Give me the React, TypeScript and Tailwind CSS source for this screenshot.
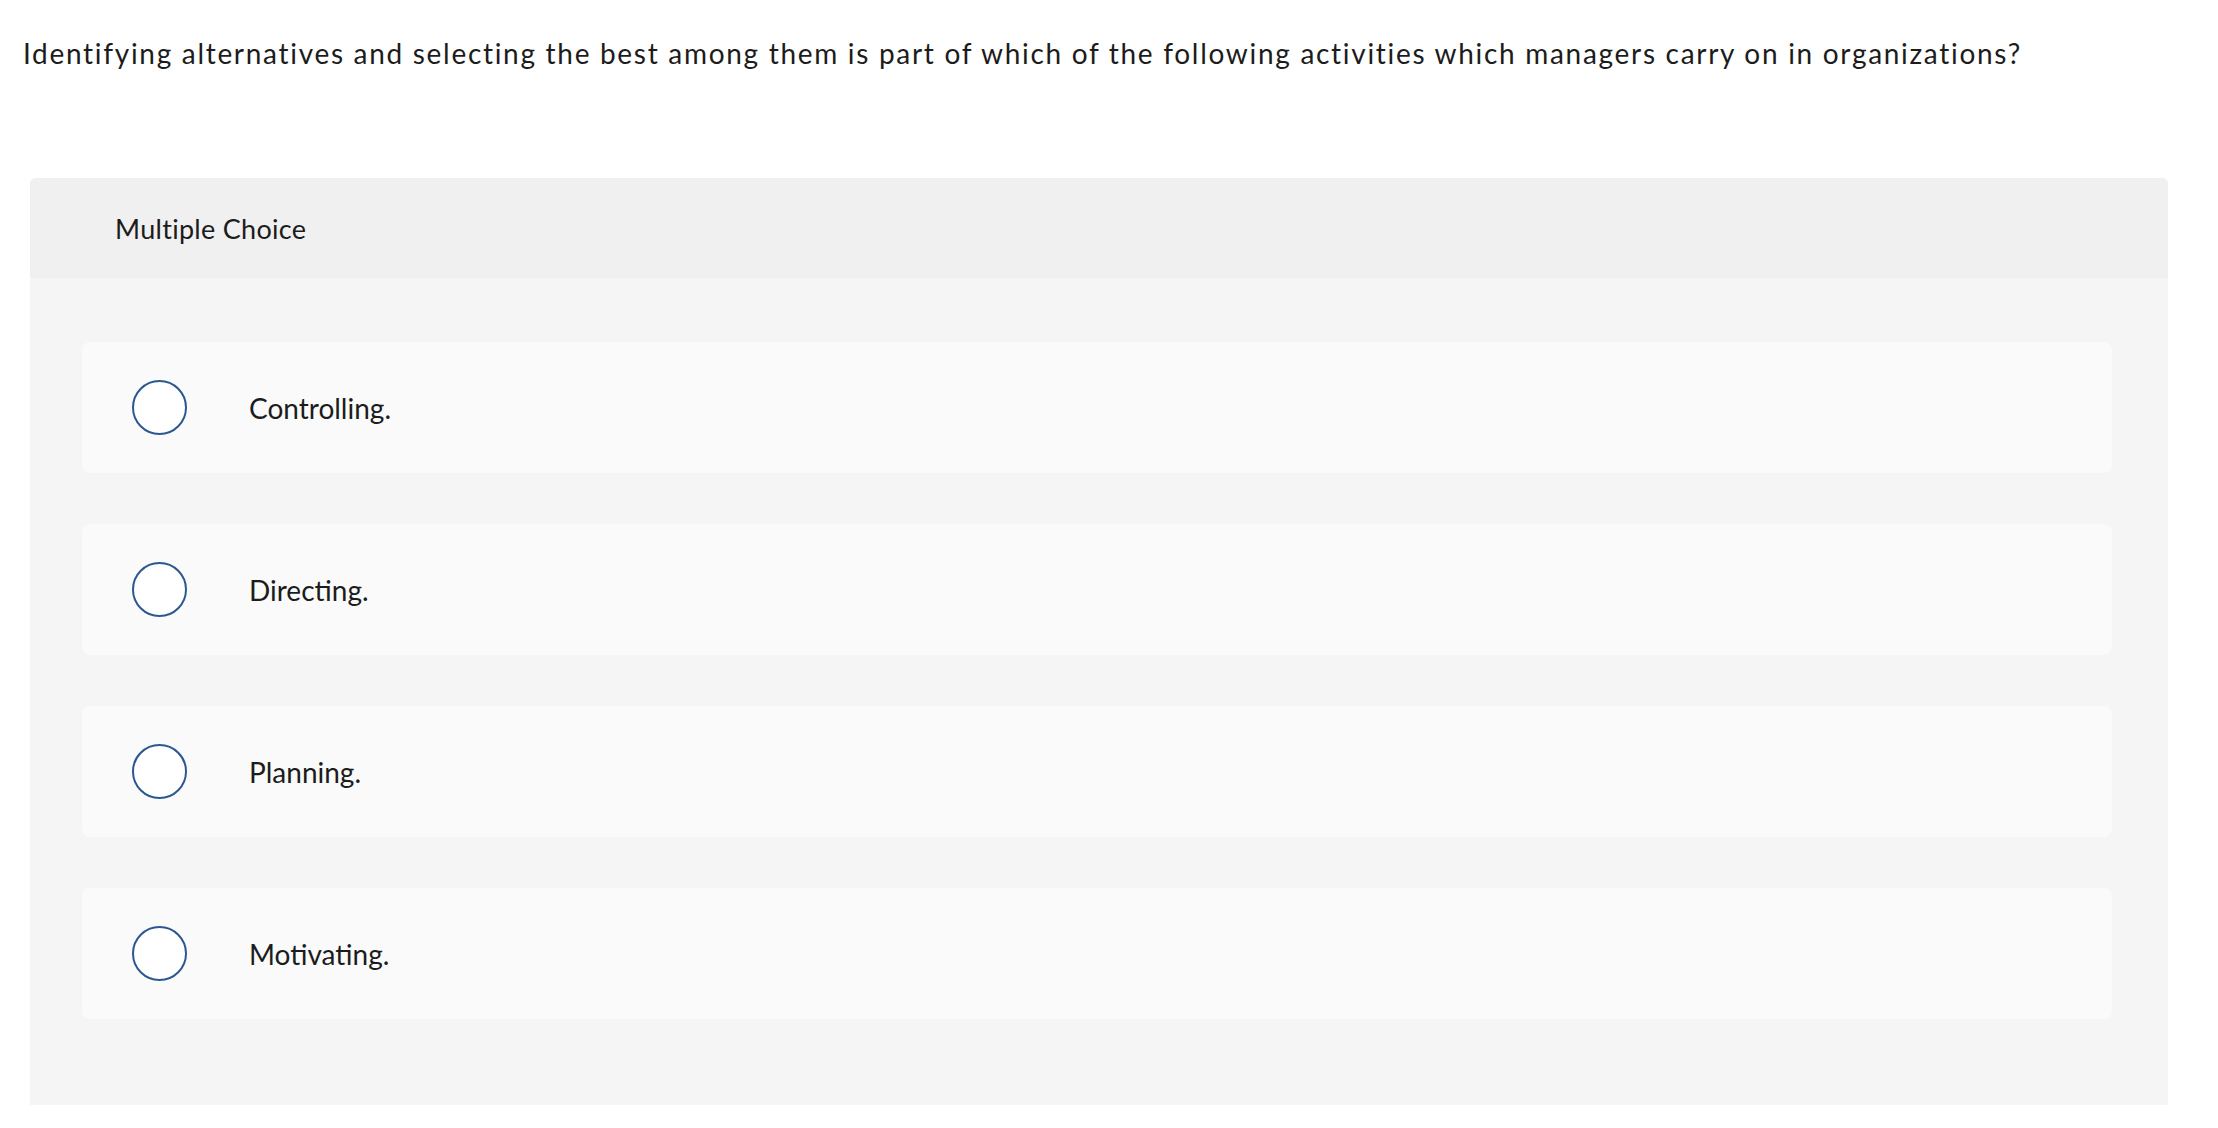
const options = ["Controlling.", "Directing.", "Planning.", "Motivating."];

const RadioCircle = () => (
  <span className="block w-[55px] h-[55px] rounded-full border-2 border-[#2b5891] bg-white shrink-0" />
);

const App = () => {
  return (
    <div className="min-h-screen w-full bg-white font-['Lato',sans-serif] text-[#1c1c1c]">
      <p className="pl-[23px] pt-[33px] text-[28px] leading-[40px] tracking-[1.7px]">
        Identifying alternatives and selecting the best among them is part of which of the
        following activities which managers carry on in organizations?
      </p>

      <div className="ml-[30px] mr-[50px] mt-[105px] rounded-t-md bg-[#f5f5f5]">
        <div className="h-[100px] rounded-t-md bg-[#f0f0f0] pl-[85px] flex items-center">
          <span className="text-[27px] pt-[2px] tracking-[0.3px]">Multiple Choice</span>
        </div>

        <div className="pl-[52px] pr-[56px] pt-[64px] pb-[86px] flex flex-col gap-[51px]">
          {options.map((label) => (
            <label
              key={label}
              className="h-[131px] rounded-lg bg-[#fafafa] flex items-center pl-[50px] cursor-pointer"
            >
              <RadioCircle />
              <span className="ml-[62px] text-[28px]">{label}</span>
            </label>
          ))}
        </div>
      </div>
    </div>
  );
};

export default App;
